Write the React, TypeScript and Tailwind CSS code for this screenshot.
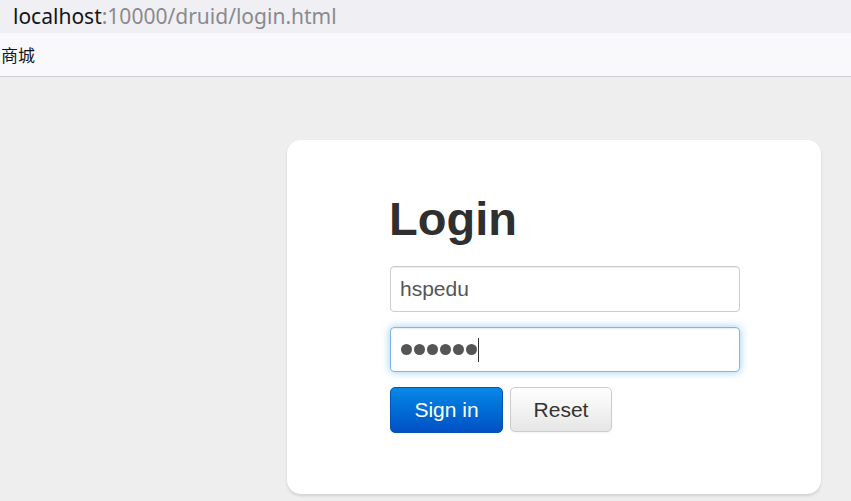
import React from 'react'

const App = () => {
  return (
    <div className="w-[851px] h-[501px] overflow-hidden bg-[#eeeeee] flex flex-col" style={{ fontFamily: '"Liberation Sans", Arial, sans-serif' }}>
      <div className="h-[33px] bg-[#f0f0f4] flex items-center pl-[13px] text-[21px] font-['Noto_Sans','Open_Sans',sans-serif] leading-none">
        <span className="text-[#15141a]">localhost</span>
        <span className="text-[#8a8a8e]">:10000/druid/login.html</span>
      </div>
      <div className="h-[44px] bg-[#f9f9fb] border-b border-[#cfcfd8] flex items-center pl-[1px] text-[17px] text-[#15141a] font-['Noto_Sans_CJK_SC',sans-serif]">
        商城
      </div>
      <div className="flex-1 pl-[287px] pt-[63px]">
        <div className="w-[534px] h-[354px] bg-white rounded-[14px] shadow-[0_2px_3px_rgba(0,0,0,0.12)] pl-[103px] pt-[50px]">
          <h1 className="text-[47px] font-bold text-[#2f2f2f] leading-[58px] mb-[18px] ml-[-1px]">Login</h1>
          <div className="w-[350px] h-[46px] border border-[#cccccc] rounded-[4px] flex items-center px-[9px] text-[21px] text-[#555555] shadow-[inset_0_1px_1px_rgba(0,0,0,0.075)]">
            hspedu
          </div>
          <div className="w-[350px] h-[45px] mt-[15px] border border-[rgba(82,168,236,0.8)] rounded-[4px] flex items-center px-[10px] shadow-[inset_0_1px_1px_rgba(0,0,0,0.075),0_0_8px_rgba(82,168,236,0.6)]">
            <span className="flex gap-[2px]">
              {[0, 1, 2, 3, 4, 5].map((i) => (
                <span key={i} className="w-[11px] h-[11px] rounded-full bg-[#555555]" />
              ))}
            </span>
            <span className="w-[1px] h-[24px] bg-[#333] ml-[1px]" />
          </div>
          <div className="flex gap-[7px] mt-[15px]">
            <button className="w-[113px] h-[46px] rounded-[5px] border border-[#0055b3] bg-gradient-to-b from-[#0a88e6] to-[#0350c4] text-white text-[21px]">
              Sign in
            </button>
            <button className="w-[102px] h-[45px] rounded-[5px] border border-[#cccccc] bg-gradient-to-b from-white to-[#e6e6e6] text-[#333333] text-[21px] shadow-[0_1px_2px_rgba(0,0,0,0.05)]">
              Reset
            </button>
          </div>
        </div>
      </div>
    </div>
  )
}

export default App
